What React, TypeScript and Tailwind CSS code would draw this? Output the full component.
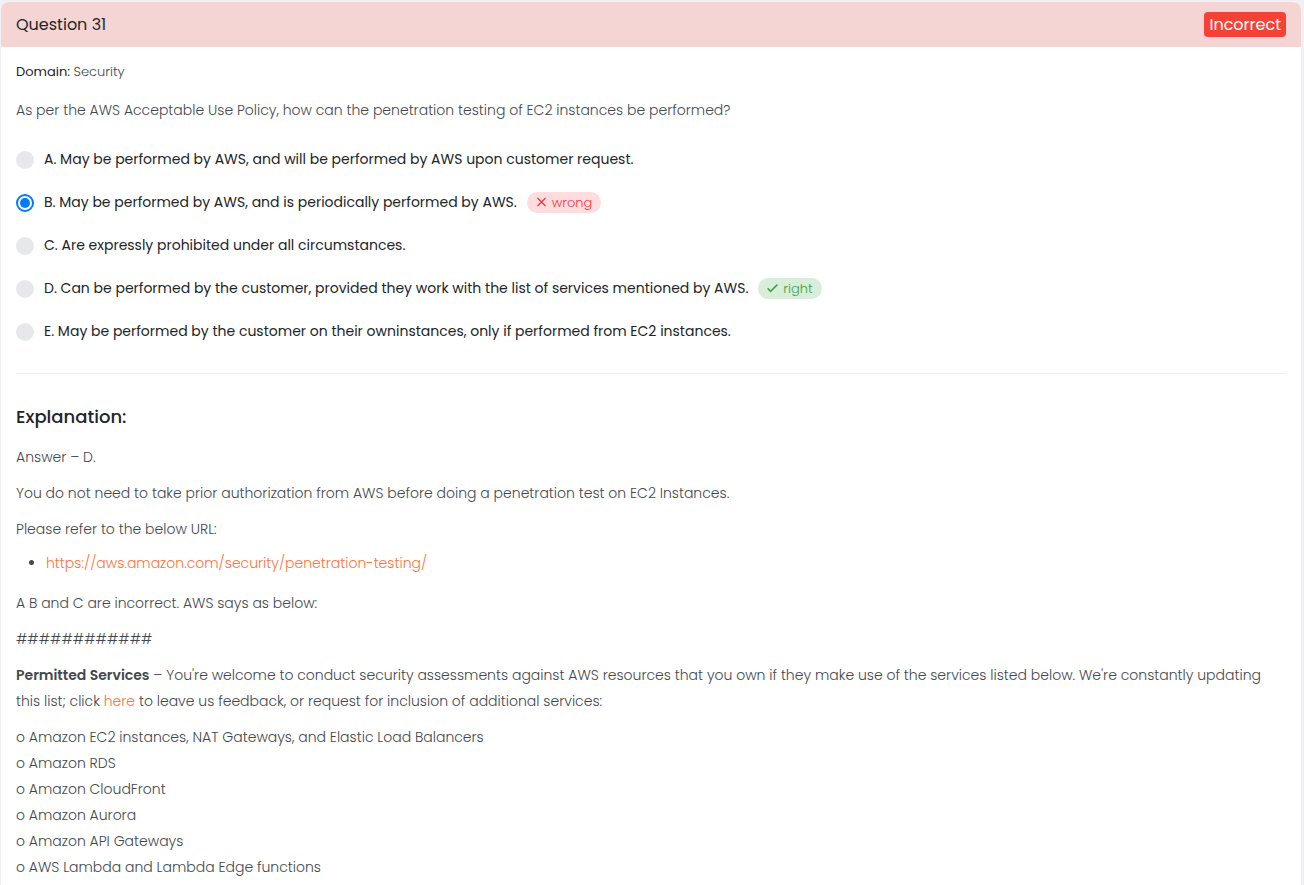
import React from "react";

type Mark = "wrong" | "right";

const options: { id: string; text: string; mark?: Mark }[] = [
  { id: "A", text: "A. May be performed by AWS, and will be performed by AWS upon customer request." },
  { id: "B", text: "B. May be performed by AWS, and is periodically performed by AWS.", mark: "wrong" },
  { id: "C", text: "C. Are expressly prohibited under all circumstances." },
  {
    id: "D",
    text: "D. Can be performed by the customer, provided they work with the list of services mentioned by AWS.",
    mark: "right",
  },
  { id: "E", text: "E. May be performed by the customer on their owninstances, only if performed from EC2 instances." },
];

const services = [
  "Amazon EC2 instances, NAT Gateways, and Elastic Load Balancers",
  "Amazon RDS",
  "Amazon CloudFront",
  "Amazon Aurora",
  "Amazon API Gateways",
  "AWS Lambda and Lambda Edge functions",
];

function MarkBadge({ mark }: { mark: Mark }) {
  const wrong = mark === "wrong";
  return (
    <span
      className={
        wrong
          ? "mt-0.5 ml-[10px] flex h-[21px] shrink-0 items-center gap-[5px] rounded-full bg-[#ffdcdd] px-[9px] text-[13px] text-[#ef4048]"
          : "mt-0.5 ml-[10px] flex h-[21px] shrink-0 items-center gap-[5px] rounded-full bg-[#d8eeda] px-[9px] text-[13px] text-[#3da342]"
      }
    >
      <svg
        viewBox="0 0 11 11"
        className="size-[11px]"
        fill="none"
        stroke={wrong ? "#f0323c" : "#43a047"}
        strokeWidth={wrong ? 1.2 : 1.5}
        aria-hidden="true"
      >
        {wrong ? <path d="M1.5 1 9.5 9M9.5 1 1.5 9" /> : <path d="M.6 5.4 3.6 8.4 10.4 1.6" />}
      </svg>
      {mark}
    </span>
  );
}

export default function App() {
  const [selected, setSelected] = React.useState("B");

  return (
    <div className="min-h-screen bg-[#f1f1f5] pt-[2px] pr-[3px] pl-px font-['Poppins','Inter',sans-serif] text-[14px] leading-[26px] font-light text-[#44484e]">
      <article className="min-h-screen rounded-t-lg bg-white">
        <header className="flex h-[45px] items-center justify-between rounded-t-lg bg-[#f5d5d3] px-[15px]">
          <h1 className="text-[16px] font-normal text-[#212529]">Question 31</h1>
          <span className="flex h-[25px] items-center rounded bg-[#f44336] px-[5px] text-[16px] font-normal text-white">
            Incorrect
          </span>
        </header>

        <main className="px-[15px] pt-3 pb-4">
          <p className="text-[13px]">
            <span className="font-normal text-[#212529]">Domain:</span> Security
          </p>
          <fieldset className="mt-3">
            <legend className="pb-[14px]">
              As per the AWS Acceptable Use Policy, how can the penetration testing of EC2 instances be performed?
            </legend>
            {options.map((option) => (
              <div key={option.id} className="flex h-[43px] items-center">
                <label className="flex items-center gap-[10px] font-normal text-[#212529]">
                  <input
                    type="radio"
                    name="answer"
                    value={option.id}
                    checked={selected === option.id}
                    onChange={() => setSelected(option.id)}
                    className="mt-0.5 size-[18px] shrink-0 appearance-none rounded-full bg-[#e6e8ea] checked:border-2 checked:border-[#007bff] checked:bg-[#007bff] checked:bg-clip-content checked:p-[2px]"
                  />
                  {option.text}
                </label>
                {option.mark && <MarkBadge mark={option.mark} />}
              </div>
            ))}
          </fieldset>

          <hr className="mt-[21px] mb-[30px] border-[#f0f0f0]" />

          <section>
            <h2 className="mb-[14px] text-[18px] font-medium text-[#212529]">Explanation:</h2>
            <div className="flex flex-col gap-[10px]">
              <p>Answer – D.</p>
              <p>You do not need to take prior authorization from AWS before doing a penetration test on EC2 Instances.</p>
              <p>Please refer to the below URL:</p>
            </div>
            <ul className="mt-2 mb-[14px] list-disc pl-[30px]">
              <li>
                <a href="https://aws.amazon.com/security/penetration-testing/" className="text-[#f9743f]">
                  https://aws.amazon.com/security/penetration-testing/
                </a>
              </li>
            </ul>
            <div className="flex flex-col gap-[10px]">
              <p>A B and C are incorrect. AWS says as below:</p>
              <p>############</p>
              <p>
                <strong className="font-semibold">Permitted Services</strong> – You're welcome to conduct security
                assessments against AWS resources that you own if they make use of the services listed below. We're
                constantly updating this list; click{" "}
                <a href="https://aws.amazon.com/security/penetration-testing/" className="text-[#f9743f]">
                  here
                </a>{" "}
                to leave us feedback, or request for inclusion of additional services:
              </p>
              <p>
                {services.map((service) => (
                  <span key={service} className="block">
                    o {service}
                  </span>
                ))}
              </p>
            </div>
          </section>
        </main>
      </article>
    </div>
  );
}
